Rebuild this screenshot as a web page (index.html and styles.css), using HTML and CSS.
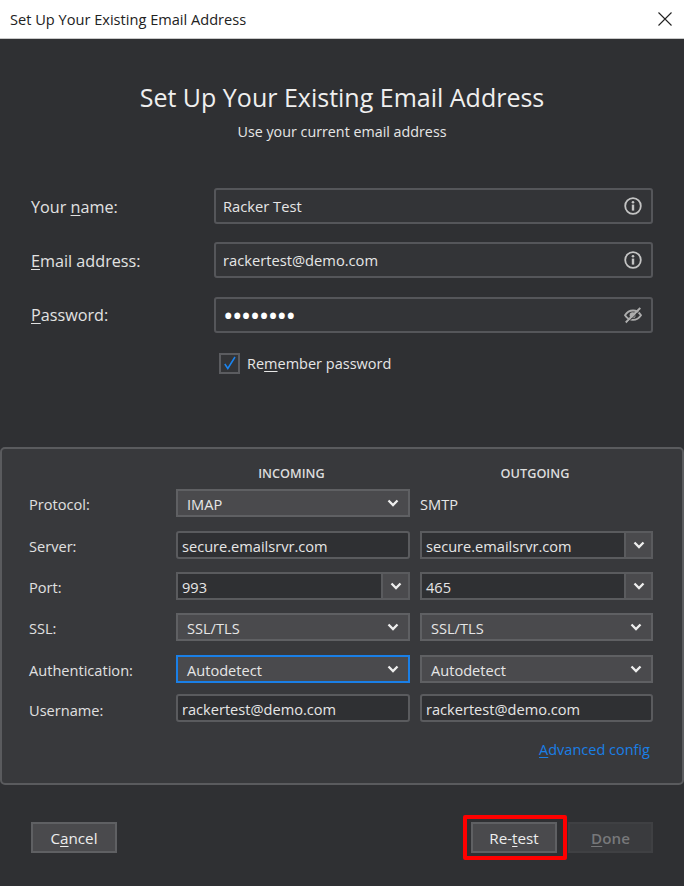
FILE: index.html
```html
<!DOCTYPE html>
<html lang="en">
<head>
    <meta charset="UTF-8">
    <meta name="viewport" content="width=device-width, initial-scale=1.0">
    <title>Set Up Your Existing Email Address</title>
    <link rel="stylesheet" href="styles.css">
</head>
<body>

    <header class="titlebar">
        <span class="titlebar-text">Set Up Your Existing Email Address</span>
        <svg class="close" width="14" height="14" viewBox="0 0 14 14"><path d="M.5.5l13 13M13.5.5l-13 13" stroke="#222" stroke-width="1.1" fill="none"/></svg>
    </header>

    <main class="dialog">
        <h1>Set Up Your Existing Email Address</h1>
        <p class="subtitle">Use your current email address</p>

        <div class="account">
            <div class="label">Your <u>n</u>ame:</div>
            <div class="field">
                <span>Racker Test</span>
                <svg class="icon" width="18" height="18" viewBox="0 0 18 18"><circle cx="9" cy="9" r="7.8" fill="none" stroke="#c4c4c4" stroke-width="1.8"/><circle cx="9" cy="5.3" r="1.3" fill="#c4c4c4"/><rect x="7.8" y="7.6" width="2.4" height="6" fill="#c4c4c4"/></svg>
            </div>
            <div class="label"><u>E</u>mail address:</div>
            <div class="field">
                <span>rackertest@demo.com</span>
                <svg class="icon" width="18" height="18" viewBox="0 0 18 18"><circle cx="9" cy="9" r="7.8" fill="none" stroke="#c4c4c4" stroke-width="1.8"/><circle cx="9" cy="5.3" r="1.3" fill="#c4c4c4"/><rect x="7.8" y="7.6" width="2.4" height="6" fill="#c4c4c4"/></svg>
            </div>
            <div class="label"><u>P</u>assword:</div>
            <div class="field">
                <span class="dots">••••••••</span>
                <svg class="icon" width="18" height="18" viewBox="0 0 18 18"><path d="M1 9.2C3 6 5.700 4.500 9 4.500s6 1.500 8 4.700c-2 3.100-4.700 4.600-8 4.600s-6-1.500-8-4.600z" fill="none" stroke="#adadad" stroke-width="1.800"/><circle cx="8.600" cy="9.200" r="3" fill="#adadad"/><path d="M1.800 16.500L16.300 2" stroke="#adadad" stroke-width="2"/><path d="M3.400 16.900L17.800 3" stroke="#333437" stroke-width="1"/></svg>
            </div>
            <label class="remember">
                <span class="checkbox">
                    <svg width="14" height="14" viewBox="0 0 14 14"><path d="M1.800 8l3 4.500L12 1" fill="none" stroke="#1a84f0" stroke-width="1.500"/></svg>
                </span>
                <span>Re<u>m</u>ember password</span>
            </label>
        </div>

        <section class="panel">
            <div class="col-title col-in">INCOMING</div>
            <div class="col-title col-out">OUTGOING</div>

            <div class="row-label">Protocol:</div>
            <div class="select"><span>IMAP</span><svg class="chev" width="12" height="8" viewBox="0 0 12 8"><path d="M1.500 1.500L6 6l4.500-4.500" fill="none" stroke="#eee" stroke-width="2.300"/></svg></div>
            <div class="plain">SMTP</div>

            <div class="row-label">Server:</div>
            <div class="text">secure.emailsrvr.com</div>
            <div class="combo"><span>secure.emailsrvr.com</span><b class="combo-btn"><svg class="chev" width="12" height="8" viewBox="0 0 12 8"><path d="M1.500 1.500L6 6l4.500-4.500" fill="none" stroke="#eee" stroke-width="2.300"/></svg></b></div>

            <div class="row-label">Port:</div>
            <div class="combo"><span>993</span><b class="combo-btn"><svg class="chev" width="12" height="8" viewBox="0 0 12 8"><path d="M1.500 1.500L6 6l4.500-4.500" fill="none" stroke="#eee" stroke-width="2.300"/></svg></b></div>
            <div class="combo"><span>465</span><b class="combo-btn"><svg class="chev" width="12" height="8" viewBox="0 0 12 8"><path d="M1.500 1.500L6 6l4.500-4.500" fill="none" stroke="#eee" stroke-width="2.300"/></svg></b></div>

            <div class="row-label">SSL:</div>
            <div class="select"><span>SSL/TLS</span><svg class="chev" width="12" height="8" viewBox="0 0 12 8"><path d="M1.500 1.500L6 6l4.500-4.500" fill="none" stroke="#eee" stroke-width="2.300"/></svg></div>
            <div class="select"><span>SSL/TLS</span><svg class="chev" width="12" height="8" viewBox="0 0 12 8"><path d="M1.500 1.500L6 6l4.500-4.500" fill="none" stroke="#eee" stroke-width="2.300"/></svg></div>

            <div class="row-label">Authentication:</div>
            <div class="select focused"><span>Autodetect</span><svg class="chev" width="12" height="8" viewBox="0 0 12 8"><path d="M1.500 1.500L6 6l4.500-4.500" fill="none" stroke="#eee" stroke-width="2.300"/></svg></div>
            <div class="select"><span>Autodetect</span><svg class="chev" width="12" height="8" viewBox="0 0 12 8"><path d="M1.500 1.500L6 6l4.500-4.500" fill="none" stroke="#eee" stroke-width="2.300"/></svg></div>

            <div class="row-label last">Username:</div>
            <div class="text last">rackertest@demo.com</div>
            <div class="text last">rackertest@demo.com</div>

            <a class="advanced" href="#"><u>A</u>dvanced config</a>
        </section>

        <footer class="actions">
            <button class="btn"><span>C<u>a</u>ncel</span></button>
            <div class="right">
                <div class="highlight"><button class="btn">Re-<u>t</u>est</button></div>
                <button class="btn disabled"><u>D</u>one</button>
            </div>
        </footer>
    </main>

</body>
</html>
```

FILE: styles.css
```css
/* dialog window */
* { box-sizing: border-box; }
html, body { margin: 0; height: 100%; }
body { width: 684px; height: 886px; overflow: hidden; font-family: "Open Sans", "Noto Sans", sans-serif; font-size: 14.600px; color: #e6e6e6; background: #2f3033; }
u { text-underline-offset: 2px; text-decoration-thickness: 1px; }

.titlebar { height: 39px; padding: 0 12px 1px 10px; background: #fff; border-bottom: 1px solid #c9c9c9; display: flex; align-items: center; justify-content: space-between; color: #222; font-size: 14.600px; }

h1 { margin: 40px 0 0; height: 36px; line-height: 36px; text-align: center; font-size: 25px; font-weight: 400; color: #efefef; }
.subtitle { margin: 7px 0 0; height: 20px; line-height: 20px; text-align: center; font-size: 14.300px; }

/* top form */
.account { margin: 46px 31px 0; display: grid; grid-template-columns: 170px 439px; column-gap: 13px; row-gap: 18.400px; grid-auto-rows: 36px; align-items: center; font-size: 16.200px; }
.label { color: #e2e2e2; padding-top: 1px; }
.field { height: 36px; padding: 0 9px 0 7px; display: flex; align-items: center; justify-content: space-between; background: #333437; border: 2px solid #55565a; border-radius: 3px; font-size: 14.700px; }
.dots { font-size: 28px; letter-spacing: -1.600px; line-height: 20px; color: #fff; }
.remember { grid-column: 2; display: flex; align-items: center; gap: 7px; margin: -12px 0 0 5px; height: 21px; font-size: 14.500px; }
.checkbox { width: 21px; height: 21px; border: 2px solid #5b5c60; background: #333437; display: flex; align-items: center; justify-content: center; }

/* server settings panel */
.panel { height: 338px; margin-top: 60px; padding: 10px 0 0 27px; background: #38393c; border: 2px solid #5a5b5e; border-radius: 5px; display: grid; grid-template-columns: 137px 234px 233px; column-gap: 10px; grid-template-rows: 17px repeat(6, 28px) 1fr; row-gap: 13.300px; align-content: start; }
.col-title { height: 20px; margin-top: 5px; padding-right: 3px; text-align: center; font-size: 12.700px; font-weight: 600; color: #dcdcdc; }
.col-in { grid-column: 2; }
.col-out { grid-column: 3; }
.row-label { align-self: center; padding-top: 2px; color: #e0e0e0; }
.plain { align-self: center; padding-top: 2px; }
.select, .text, .combo { height: 28px; display: flex; align-items: center; }
.select { padding: 0 9px; justify-content: space-between; background: #4a4a4d; border: 2px solid #5f6063; }
.select span, .combo span { margin-top: 2px; }
.select.focused { border-color: #1a7fe6; }
.text { padding: 2px 4px 0; background: #2f3033; border: 2px solid #5a5b5e; border-radius: 3px; }
.combo { padding-left: 4px; justify-content: space-between; background: #2f3033; border: 2px solid #5a5b5e; }
.combo-btn { width: 27px; height: 100%; display: flex; align-items: center; justify-content: center; background: #4a4a4d; border-left: 2px solid #5a5b5e; }
.last { margin-top: -2px; }
.advanced { grid-column: 2 / 4; justify-self: end; margin: 3px 3px 0 0; height: 20px; color: #1a7fe6; text-decoration: none; font-size: 14.500px; }

/* bottom buttons */
.actions { margin: 30px 31px 0; display: flex; justify-content: space-between; align-items: center; }
.right { display: flex; align-items: center; }
.btn { width: 86px; height: 31px; padding: 0; background: #4a4a4d; border: 2px solid #5f6063; color: #eee; font: inherit; font-size: 15.200px; }
.highlight { margin-right: 1px; padding: 3px 4px; border: 4px solid #f00; border-radius: 2px; height: 45px; width: 104px; }
.highlight .btn { display: block; }
.disabled { width: 85px; background: #3a3b3e; border-color: #3f4043; color: #77787a; font-weight: 600; }
```
